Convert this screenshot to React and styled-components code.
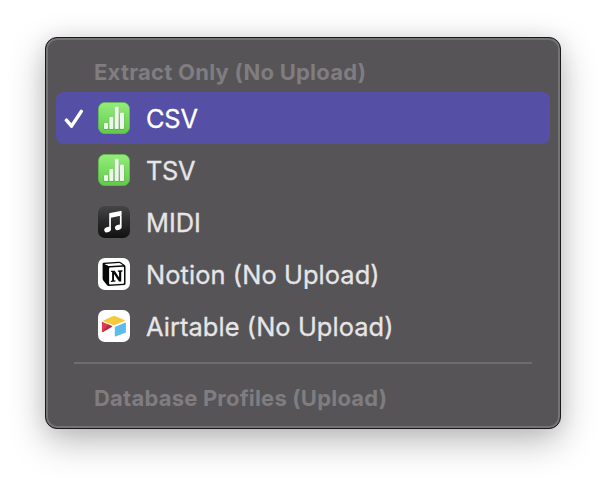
import React from 'react';
import styled, { createGlobalStyle } from 'styled-components';

const GlobalStyle = createGlobalStyle`
  * { box-sizing: border-box; }
  body { margin: 0; background: #fff; overflow: hidden; }
`;

const Page = styled.main`
  width: 606px;
  height: 482px;
  padding: 37px 45px 53px;
  font-family: Inter, "Liberation Sans", sans-serif;
`;

const Menu = styled.div`
  height: 392px;
  padding: 15px 10px 0;
  border: 1px solid #19181c;
  border-radius: 12px;
  background: #565457;
  box-shadow: inset 0 0 0 2px #747474, 0 12px 36px rgba(0, 0, 0, 0.28), 0 0 20px rgba(0, 0, 0, 0.07);
`;

const Heading = styled.div`
  height: 39px;
  padding-left: 38px;
  color: #7f7d80;
  font-size: 22px;
  font-weight: 700;
  line-height: 39px;
  letter-spacing: ${(p) => p.$tracking}px;
  white-space: nowrap;
`;

const Item = styled.div`
  display: flex;
  align-items: center;
  height: 52px;
  padding-left: 8px;
  border-radius: 8px;
  color: ${(p) => (p.$selected ? '#fff' : '#e6e5e7')};
  background: ${(p) => (p.$selected ? '#554fa6' : 'transparent')};
`;

const CheckSlot = styled.span`
  width: 34px;
  height: 32px;
  flex: none;
`;

const Icon = styled.svg`
  display: block;
  width: 32px;
  height: 32px;
  flex: none;
`;

const Label = styled.span`
  margin: 2px 0 0 16px;
  font-size: 25.4px;
  line-height: 32px;
  letter-spacing: ${(p) => p.$tracking}px;
  -webkit-text-stroke: 0.3px currentColor;
  white-space: nowrap;
`;

const Divider = styled.hr`
  height: 2px;
  margin: 10px 18px 15px;
  border: 0;
  background: #6e6c6f;
`;

function Check() {
  return (
    <svg width="20" height="32" viewBox="0 0 20 32" fill="none">
      <path d="M2.4 18.2 7.5 24.1 17.3 9.4" stroke="#fff" strokeWidth="3.5" strokeLinecap="round" strokeLinejoin="round" />
    </svg>
  );
}

function NumbersIcon() {
  return (
    <Icon viewBox="0 0 32 32">
      <defs>
        <linearGradient id="green" x2="0" y2="1">
          <stop stopColor="#94ed7b" />
          <stop offset="1" stopColor="#61ca49" />
        </linearGradient>
      </defs>
      <rect x=".4" y=".4" width="31.2" height="31.2" rx="6.5" fill="url(#green)" stroke="#62bb50" strokeWidth=".8" />
      <g fill="#338d27" opacity=".35" transform="translate(0 .5)">
        <rect x="5.6" y="20.9" width="4.8" height="6.6" rx="1" />
        <rect x="10.9" y="14.8" width="4.8" height="12.7" rx="1" />
        <rect x="16.3" y="4.8" width="4.8" height="22.7" rx="1" />
        <rect x="21.6" y="10.8" width="4.8" height="16.7" rx="1" />
      </g>
      <g fill="#f0f3f0">
        <rect x="6" y="21" width="4" height="6.1" rx=".8" />
        <rect x="11.3" y="14.9" width="4" height="12.2" rx=".8" />
        <rect x="16.7" y="4.8" width="4" height="22.3" rx=".8" />
        <rect x="22" y="10.8" width="4" height="16.3" rx=".8" />
      </g>
    </Icon>
  );
}

function MusicIcon() {
  return (
    <Icon viewBox="0 0 32 32">
      <defs>
        <linearGradient id="black" x2="0" y2="1">
          <stop stopColor="#454446" />
          <stop offset=".5" stopColor="#29292a" />
          <stop offset="1" stopColor="#111112" />
        </linearGradient>
      </defs>
      <rect width="32" height="32" rx="7" fill="url(#black)" />
      <g fill="#fff">
        <path d="M11.2 8.1q0-.8.8-1l10.7-2.2q.9-.2.9.7v4L12.9 11.8v11.4h-1.7zM21.9 7h1.7v13.6h-1.7z" />
        <ellipse cx="9.6" cy="23.7" rx="3.4" ry="2.6" transform="rotate(-23 9.6 23.7)" />
        <ellipse cx="20.3" cy="21.3" rx="3.4" ry="2.6" transform="rotate(-23 20.3 21.3)" />
      </g>
    </Icon>
  );
}

function NotionIcon() {
  return (
    <Icon viewBox="0 0 32 32">
      <rect width="32" height="32" rx="7" fill="#fff" />
      <path d="M4.6 5.8q0-1 1-1.1L20.8 3.8q1.3-.1 2.3.7l3.5 2.6q.9.7.9 1.7v16.9q0 1.3-1.3 1.4L11 28q-1.3.1-2.1-.9L5.3 22.6q-.7-.9-.7-2z" fill="#090909" />
      <path d="M6.9 6 21 5.1q.9-.1 1.5.4L24.9 7.2 11.4 8.1q-1 .1-1.7-.5L6.7 6.3z" fill="#fff" />
      <path d="M11.1 10.5q0-.9.9-1L25.1 8.7q.9-.1.9.8v15.2q0 .9-.9 1L12 26.5q-.9.1-.9-.8z" fill="#fff" />
      <path d="M12.9 12.7h3.8l4.4 6.9v-5.6l-1.3-.4v-1l4.6-.3v1.1l-1.2.5v9.5l-2.2.2-5-7.6v6.2l1.5.4v1l-4.6.3v-1l1.2-.5v-8.3l-1.2-.4z" fill="#090909" />
    </Icon>
  );
}

function AirtableIcon() {
  return (
    <Icon viewBox="0 0 32 32">
      <rect width="32" height="32" rx="7" fill="#fff" />
      <path d="M5.4 10.4 15.2 6q.8-.3 1.6 0l9.8 4.1q.7.4 0 .8L17 15.1q-1 .3-1.9 0l-9.7-3.9q-.7-.4 0-.8z" fill="#f6c93d" />
      <path d="M17.2 16.7 27.4 12.6q.5-.1.5.5v8.9q0 .6-.5.8l-10 3.6q-.6.2-.6-.5v-8.5q0-.5.4-.7z" fill="#5dbceb" />
      <path d="M3.9 12.4q0-.8.8-.4l9.2 3.9q.8.5.1.9L4.8 21.9q-.9.4-.9-.5z" fill="#dc3d50" />
      <path d="m4.1 21.8 6.3-7.3 3.5 1.4q.8.5.1.9L4.8 21.9q-.4.2-.7-.1z" fill="#b72d40" />
    </Icon>
  );
}

const items = [
  { label: 'CSV', icon: NumbersIcon, selected: true, tracking: -0.2 },
  { label: 'TSV', icon: NumbersIcon, tracking: -0.3 },
  { label: 'MIDI', icon: MusicIcon, tracking: 0 },
  { label: 'Notion (No Upload)', icon: NotionIcon, tracking: 0.09 },
  { label: 'Airtable (No Upload)', icon: AirtableIcon, tracking: 0.08 },
];

export default function App() {
  return (
    <>
      <GlobalStyle />
      <Page>
        <Menu role="menu">
          <Heading $tracking={0.24}>Extract Only (No Upload)</Heading>
          {items.map(({ label, icon: Glyph, selected, tracking }) => (
            <Item key={label} role="menuitemradio" aria-checked={!!selected} $selected={selected}>
              <CheckSlot>{selected && <Check />}</CheckSlot>
              <Glyph />
              <Label $tracking={tracking}>{label}</Label>
            </Item>
          ))}
          <Divider />
          <Heading $tracking={0.2}>Database Profiles (Upload)</Heading>
        </Menu>
      </Page>
    </>
  );
}
